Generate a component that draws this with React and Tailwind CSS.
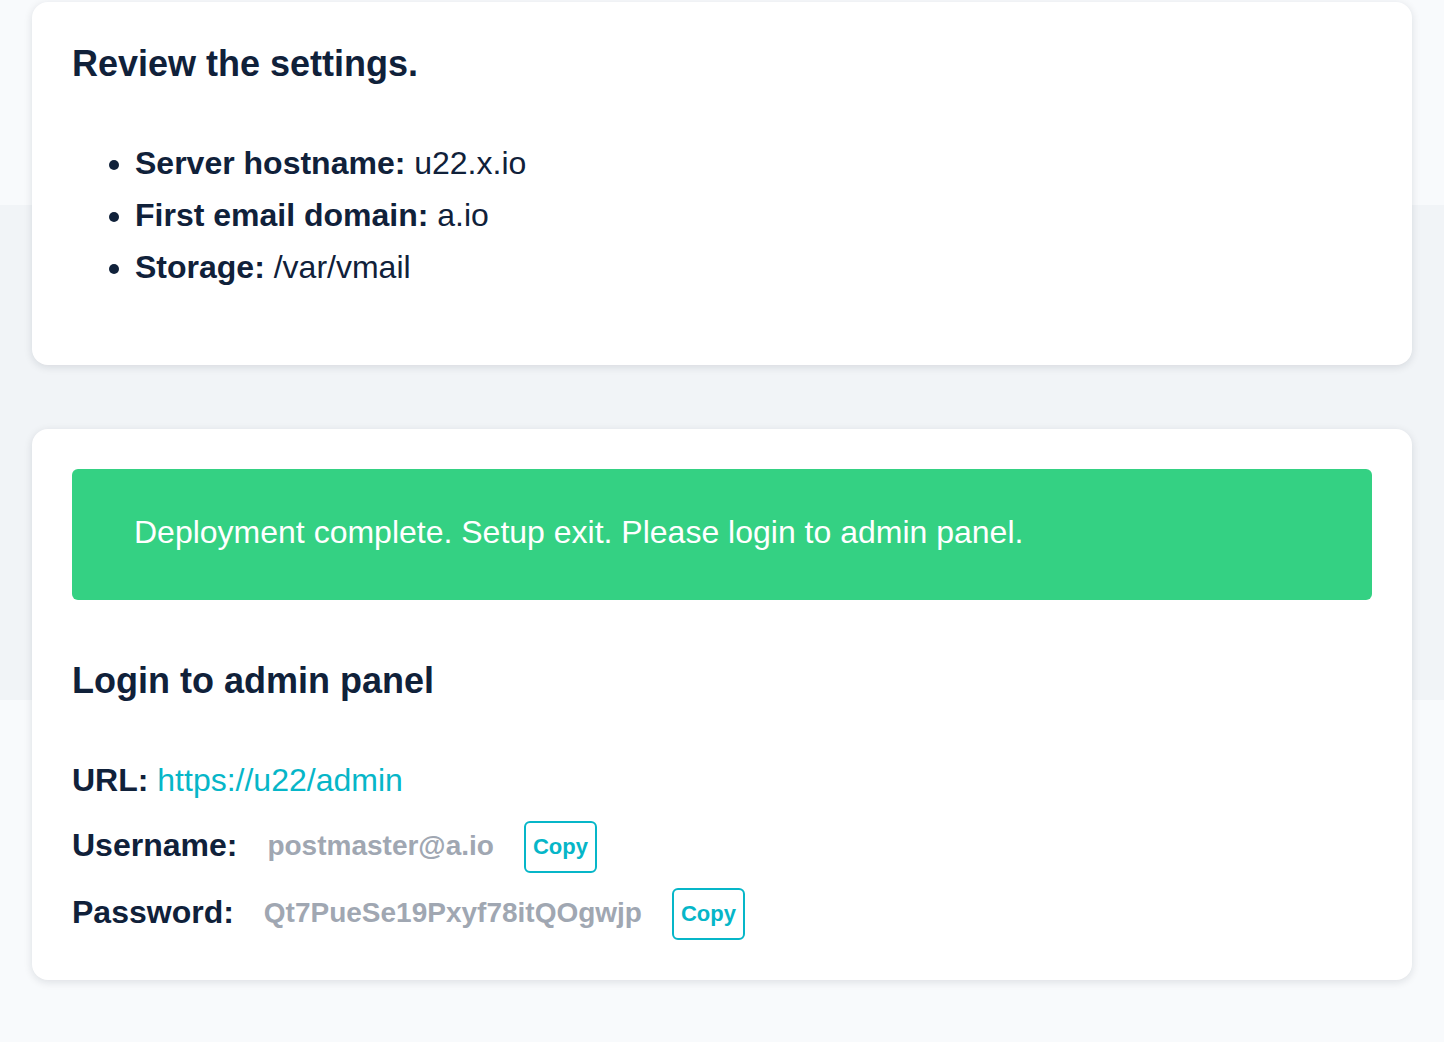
import React from 'react';

const settings = [
  { label: 'Server hostname:', value: 'u22.x.io' },
  { label: 'First email domain:', value: 'a.io' },
  { label: 'Storage:', value: '/var/vmail' },
];

function CopyButton() {
  return (
    <button className="h-[52px] px-[7px] border-2 border-[#06b6c8] rounded-[6px] text-[22px] font-bold text-[#06b6c8] leading-none">
      Copy
    </button>
  );
}

function Credential({ label, value }) {
  return (
    <div className="flex items-center gap-[30px] h-[52px]">
      <span className="text-[32px] font-bold mb-[5px]">{label}</span>
      <span className="text-[28px] font-bold text-[#a0a7b2] mb-[3px]">{value}</span>
      <CopyButton />
    </div>
  );
}

export default function App() {
  return (
    <div
      className="min-h-screen pt-[2px] pb-[62px] px-8 text-[#10213a] bg-[linear-gradient(to_bottom,#f8fafc_205px,#f1f4f7_205px,#f1f4f7_700px,#f8fafc_700px)]"
      style={{ fontFamily: '"Liberation Sans", Arial, sans-serif' }}
    >
      <div className="bg-white rounded-2xl p-10 shadow-[0_2px_8px_rgba(15,23,42,0.12)]">
        <h2 className="text-[36px] font-bold leading-[44px]">Review the settings.</h2>
        <ul className="list-disc pl-[63px] mt-[51px] mb-8 text-[32px] leading-[52px]">
          {settings.map((s) => (
            <li key={s.label}>
              <span className="font-bold">{s.label}</span> {s.value}
            </li>
          ))}
        </ul>
      </div>

      <div className="mt-16 bg-white rounded-2xl p-10 shadow-[0_2px_8px_rgba(15,23,42,0.12)]">
        <div className="bg-[#34d183] rounded-md pt-[38px] pb-[42px] px-[62px] text-white text-[32px] leading-[51px]">
          Deployment complete. Setup exit. Please login to admin panel.
        </div>
        <h2 className="mt-[58px] text-[36px] font-bold leading-[46px]">Login to admin panel</h2>
        <p className="mt-[50px] mb-[15px] text-[32px] leading-[52px]">
          <span className="font-bold">URL:</span>{' '}
          <a href="#" className="text-[#06b6c8]">https://u22/admin</a>
        </p>
        <div className="flex flex-col gap-[15px]">
          <Credential label="Username:" value="postmaster@a.io" />
          <Credential label="Password:" value="Qt7PueSe19Pxyf78itQOgwjp" />
        </div>
      </div>
    </div>
  );
}
